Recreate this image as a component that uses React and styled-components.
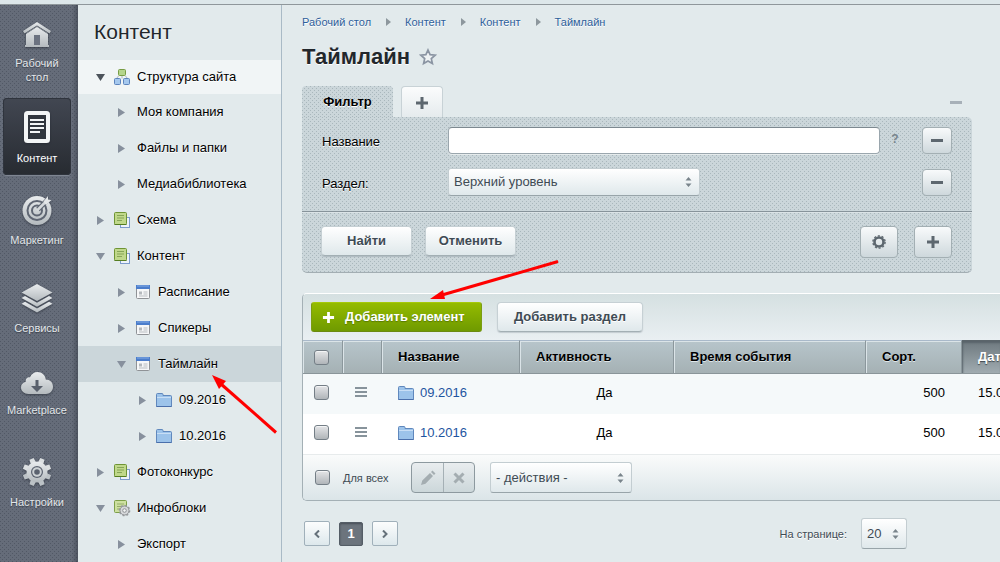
import React from 'react';
import styled, { createGlobalStyle, css } from 'styled-components';

const Global = createGlobalStyle`
  * { box-sizing: border-box; }
  body { margin: 0; background: #e2eaec; color: #111; font: 13px/16px "Liberation Sans", Arial, sans-serif; }
  button, input, select { font: inherit; color: inherit; margin: 0; }
  a { text-decoration: none; color: inherit; }
`;

const Shell = styled.div`
  display: flex;
  flex-direction: column;
  height: 100vh;
  overflow: hidden;
`;
const TopBar = styled.div`
  flex: none;
  height: 5px;
  background: #dde7ea;
  border-bottom: 1px solid #8f979b;
`;
const Body = styled.div`
  flex: 1;
  min-height: 0;
  display: flex;
`;

const Rail = styled.nav`
  flex: none;
  width: 78px;
  padding: 1px 7px 0 3px;
  display: flex;
  flex-direction: column;
  gap: 4px;
  background-color: #656c79;
  background-image: linear-gradient(to right, transparent 72px, rgba(30, 36, 46, 0.35)),
    conic-gradient(at 1px 1px, transparent 75%, #515865 0),
    conic-gradient(at 1px 1px, transparent 75%, #515865 0);
  background-size: auto, 4px 4px, 4px 4px;
  background-position: 0 0, 0 0, 2px 2px;
`;
const RailItem = styled.a`
  display: flex;
  flex-direction: column;
  align-items: center;
  gap: 8px;
  padding: 14px 0 10px;
  border-radius: 4px;
  color: #e3e7ea;
  font-size: 11px;
  line-height: 14px;
  text-align: center;
  text-shadow: 0 1px 1px #3b414c;
  ${(p) => p.$active && css`
    background: linear-gradient(#424752, #272b31);
    box-shadow: 0 0 0 1px #2f343d inset, 0 1px 0 #7f8692;
    color: #fff;
  `}
`;
const RailIcon = styled.span`
  display: flex;
  align-items: flex-end;
  height: ${(p) => p.$height}px;
  filter: drop-shadow(0 1px 1px rgba(30, 35, 45, 0.6));
  svg { display: block; }
`;

const Tree = styled.nav`
  flex: none;
  width: 204px;
  border-right: 1px solid #a9bac6;
  color: #000;
  text-shadow: 0 1px 0 #fff;
`;
const TreeTitle = styled.h2`
  margin: 0;
  padding: 15px 16px 16px;
  font-size: 21px;
  line-height: 24px;
  font-weight: 400;
  color: #22272c;
`;
const TreeRow = styled.a`
  display: flex;
  align-items: center;
  height: 36px;
  padding-left: ${(p) => 16 + p.$level * 21}px;
  background: ${(p) => (p.$tone === 'open' ? '#f1f5f6' : p.$tone === 'current' ? '#cbd6da' : 'transparent')};
  ${(p) => p.$tone === 'open' && css`height: 34px;`}
`;
const TreeArrow = styled.svg`
  width: 12px;
  height: 12px;
  flex: none;
  fill: ${(p) => (p.$dark ? '#4c535b' : '#87909d')};
`;
const TreeIcon = styled.span`
  width: 18px;
  height: 18px;
  margin: 0 6px 0 7px;
  svg { display: block; }
`;
const TreeLabel = styled.span`
  margin-left: ${(p) => (p.$plain ? 10 : 0)}px;
`;

const Main = styled.main`
  flex: 1;
  min-width: 0;
  overflow: hidden;
  padding: 9px 0 0 20px;
`;
const Crumbs = styled.ol`
  display: flex;
  align-items: center;
  margin: 0;
  padding: 0;
  list-style: none;
  font-size: 11px;
  line-height: 16px;
  color: #2e609b;
  text-shadow: 0 1px 0 #fff;
`;
const Crumb = styled.li`
  display: flex;
  align-items: center;
  svg { margin: 0 14px 0 15px; }
`;
const Heading = styled.div`
  display: flex;
  align-items: center;
  gap: 9px;
  margin: 13px 0 16px;
`;
const Title = styled.h1`
  margin: 0;
  font-size: 22px;
  line-height: 27px;
  font-weight: 700;
  color: #22272c;
  text-shadow: 0 1px 0 #fff;
`;
const IconButton = styled.button`
  display: block;
  padding: 0;
  border: 0;
  background: none;
  svg { display: block; }
`;

const dots = css`
  background-color: #cbd6da;
  background-image: conic-gradient(at 1px 1px, transparent 75%, #a9b7bc 0),
    conic-gradient(at 1px 1px, transparent 75%, #a9b7bc 0);
  background-size: 4px 4px;
  background-position: 0 0, 2px 2px;
`;
const Filter = styled.section`
  margin-right: 28px;
`;
const Tabs = styled.div`
  display: flex;
  align-items: flex-end;
  gap: 8px;
  height: 31px;
`;
const FilterTab = styled.button`
  height: 31px;
  width: 91px;
  padding: 0;
  border: 0;
  border-radius: 4px 4px 0 0;
  ${dots}
  font-weight: 700;
  color: #000;
  text-shadow: 0 1px 0 #fff;
`;
const AddTab = styled.button`
  display: flex;
  align-items: center;
  justify-content: center;
  height: 31px;
  width: 42px;
  padding: 2px 0 0;
  border: 1px solid #c8d2d6;
  border-bottom: 0;
  border-radius: 4px 4px 0 0;
  background: linear-gradient(#fbfcfc, #e5ebed);
`;
const Collapse = styled.button`
  width: 12px;
  height: 3px;
  margin: 0 10px 13px auto;
  padding: 0;
  border: 0;
  background: #a7b0b8;
`;
const FilterBody = styled.form`
  margin: 0;
  border-radius: 0 5px 5px 5px;
  border-bottom: 1px solid #a3aeb3;
  ${dots}
`;
const Fields = styled.div`
  padding: 2px 20px 8px;
`;
const Field = styled.div`
  display: flex;
  align-items: center;
  height: 42px;
`;
const FieldLabel = styled.label`
  width: 126px;
  flex: none;
  padding-top: 4px;
  color: #000;
  text-shadow: 0 1px 0 #fff;
`;
const FieldInput = styled.input`
  flex: 1;
  min-width: 0;
  height: 27px;
  padding: 0 6px;
  border: 1px solid #9aa6ad;
  border-top-color: #7d8990;
  border-radius: 4px;
  background: #fff;
  box-shadow: 0 1px 0 #e6eced;
`;
const Hint = styled.button`
  width: 30px;
  margin-right: 12px;
  padding: 0 0 2px;
  border: 0;
  background: none;
  font-weight: 700;
  font-size: 12px;
  color: #78848c;
`;
const Push = styled.span`
  flex: 1;
`;
const SelectWrap = styled.span`
  position: relative;
  display: block;
  flex: none;
  width: ${(p) => p.$width}px;
  height: ${(p) => p.$height}px;
  > svg { position: absolute; right: 8px; top: 50%; margin-top: -5px; pointer-events: none; }
`;
const SelectBox = styled.select`
  appearance: none;
  width: 100%;
  height: 100%;
  padding: 0 20px 0 5px;
  border: 1px solid #c3cdd1;
  border-bottom-color: #98a4a9;
  border-radius: 3px;
  background: linear-gradient(#fff, #dfe8eb);
  color: #3f4b54;
`;
const buttonFace = css`
  display: flex;
  align-items: center;
  justify-content: center;
  padding: 0;
  border: 1px solid #c6d0d4;
  border-bottom-color: #a3afb4;
  border-radius: 4px;
  background: linear-gradient(#fff, #dfe8eb);
  color: #3f4b54;
  font-weight: 700;
  text-shadow: 0 1px 0 #fff;
`;
const PushButton = styled.button`
  ${buttonFace}
  height: 30px;
  width: ${(p) => p.$width}px;
  box-shadow: 0 1px 1px rgba(90, 105, 115, 0.25);
`;
const SquareButton = styled.button`
  ${buttonFace}
  border-color: #a3afb3;
  background: linear-gradient(#f8fafb, #ced8dc);
  width: ${(p) => p.$width}px;
  height: ${(p) => p.$height}px;
`;
const FilterFoot = styled.div`
  display: flex;
  align-items: flex-start;
  gap: 13px;
  height: 61px;
  padding: 14px 20px 0 19px;
  border-top: 1px solid #87939a;
  box-shadow: inset 0 1px 0 #dce4e7;
`;
const ToolGroup = styled.div`
  display: flex;
  gap: 16px;
  margin-left: auto;
`;

const List = styled.section`
  margin-top: 20px;
  border: 1px solid #a4b0b5;
  border-top-color: #fff;
  border-right: 0;
  border-radius: 5px 0 0 5px;
  overflow: hidden;
`;
const ListBar = styled.div`
  display: flex;
  align-items: center;
  gap: 15px;
  height: 46px;
  padding: 0 8px;
  background: linear-gradient(#d5e0e1, #e9eff2);
`;
const AddButton = styled.button`
  display: flex;
  align-items: center;
  gap: 10px;
  width: 171px;
  height: 30px;
  padding: 0 0 0 10px;
  border: 1px solid #7b9d12;
  border-top-color: #a6c90a;
  border-bottom-color: #6b8a10;
  border-radius: 3px;
  background: linear-gradient(#94bb00, #6f9a00);
  color: #fff;
  font-weight: 700;
  text-shadow: 0 1px 1px #587a00;
`;
const Table = styled.table`
  width: 100%;
  table-layout: fixed;
  border-collapse: separate;
  border-spacing: 0;
`;
const Th = styled.th`
  height: 34px;
  padding: 0 0 0 ${(p) => p.$pad ?? 16}px;
  text-align: left;
  white-space: nowrap;
  background: linear-gradient(#b7c5cb, #a5b1b4);
  border-top: 1px solid #a9b9ca;
  border-bottom: 1px solid #8a9599;
  border-right: 1px solid #8b979c;
  box-shadow: inset 1px 1px 0 #dbe4e8;
  color: #000;
  text-shadow: 0 1px 0 #dfe7ea;
  ${(p) => p.$sorted && css`
    background: linear-gradient(#6e797f, #a0abb0);
    border-top-color: #5b656b;
    border-right: 0;
    box-shadow: inset 1px 2px 2px #59646a;
    color: #fff;
    text-shadow: 0 1px 1px #3f484d;
  `}
`;
const Tr = styled.tr`
  background: ${(p) => (p.$even ? '#fff' : '#f5f9fa')};
`;
const Td = styled.td`
  height: 40px;
  padding: 0 17px 2px ${(p) => p.$pad ?? 16}px;
  text-align: ${(p) => p.$align || 'left'};
  white-space: nowrap;
  color: #000;
  svg { display: block; }
`;
const MarkCell = styled(Td)`
  padding-bottom: 4px;
`;
const FolderLink = styled.a`
  display: flex;
  align-items: center;
  gap: 6px;
  color: #1e54a0;
`;
const Check = styled.input`
  appearance: none;
  display: block;
  flex: none;
  width: 15px;
  height: 15px;
  border: 1px solid #747e86;
  border-radius: 3px;
  background: linear-gradient(#e4e5e7, #b0b5b9);
  box-shadow: inset 0 1px 0 #f4f5f6;
`;
const ListFoot = styled.div`
  display: flex;
  align-items: center;
  height: 46px;
  padding: 0 12px;
  border-top: 1px solid #e7ebec;
  background: linear-gradient(#fafbfb, #dbe5e8);
`;
const ForAll = styled.label`
  display: flex;
  align-items: center;
  gap: 13px;
  width: 96px;
  font-size: 11px;
  color: #3f4b54;
`;
const Segments = styled.div`
  display: flex;
  height: 31px;
  margin-right: 15px;
  border: 1px solid #8d999f;
  border-radius: 4px;
  background: linear-gradient(#e9edef, #ccd7da);
`;
const Segment = styled.button`
  display: flex;
  align-items: center;
  justify-content: center;
  width: 31px;
  padding: 0;
  border: 0;
  background: none;
  & + & { border-left: 1px solid #a5b0b5; }
`;

const Pager = styled.div`
  display: flex;
  align-items: center;
  margin: 17px 93px 0 2px;
`;
const PageButton = styled.button`
  display: flex;
  align-items: center;
  justify-content: center;
  width: 26px;
  height: 25px;
  padding: 0;
  margin-right: 9px;
  border: 1px solid #a0b0ba;
  border-radius: 2px;
  background: linear-gradient(#fcfdfd, #dde8ec);
`;
const CurrentPage = styled(PageButton)`
  width: 24px;
  height: 24px;
  border-color: #545d66;
  background: #6c747d;
  box-shadow: inset 0 1px 2px #474e56;
  color: #fff;
  font-weight: 700;
`;
const PerPage = styled.label`
  display: flex;
  align-items: center;
  gap: 14px;
  margin-left: auto;
  font-size: 11px;
  color: #3f4b54;
  text-shadow: 0 1px 0 #fff;
  select { font-size: 13px; }
`;
const Arrows = styled.svg`
  position: absolute;
  left: 0;
  top: 0;
  width: 1000px;
  height: 562px;
  pointer-events: none;
`;
const Defs = styled.svg`
  position: absolute;
`;

const RailGradient = () => (
  <Defs width="0" height="0">
    <defs>
      <linearGradient id="metal" x1="0" y1="0" x2="0" y2="1">
        <stop offset="0" stopColor="#e9ecee" />
        <stop offset="1" stopColor="#b4babe" />
      </linearGradient>
    </defs>
  </Defs>
);
const railIcons = {
  home: (
    <svg width="30" height="27" viewBox="0 0 30 27" fill="url(#metal)">
      <path fillRule="evenodd" d="M15 5.500 L26 13 V24 H27 V26 H3 V24 H4 V13 Z M12 14 V24 H18 V14 Z" />
      <path d="M15 1 L29 10 L27.500 12.500 L15 4.500 L2.500 12.500 L1 10 Z" />
      <path d="M4 12.500L15 5.500L26 12.500" fill="none" stroke="#838a93" />
      <rect x="12" y="14" width="6" height="10" fill="#6b7280" />
    </svg>
  ),
  content: (
    <svg width="26" height="32" viewBox="0 0 26 32">
      <rect width="26" height="32" rx="3.500" fill="#f3f5f6" />
      <rect x="4" y="4" width="18" height="24" fill="#31363e" />
      <path d="M6 9h14M6 13h14M6 17h14M6 21h10" stroke="#f3f5f6" strokeWidth="2" />
    </svg>
  ),
  marketing: (
    <svg width="30" height="30" viewBox="0 0 30 30">
      <circle cx="15" cy="15.500" r="14.500" fill="url(#metal)" />
      <circle cx="15" cy="15.500" r="9.500" fill="none" stroke="#5f6673" strokeWidth="2" />
      <circle cx="15" cy="15.500" r="5" fill="none" stroke="#5f6673" strokeWidth="2" />
      <path d="M16 14.500L25 5.500" stroke="#5f6673" strokeWidth="5" />
      <path d="M15 15.500L24 6.500" stroke="#d4d8db" strokeWidth="2.500" />
      <path d="M21.500 6.500L26 1v3.500l3.500 .500L24 10z" fill="#e3e6e8" />
    </svg>
  ),
  services: (
    <svg width="32" height="29" viewBox="0 0 32 29" fill="url(#metal)">
      <path d="M16 0L31.500 8.500L16 17L.500 8.500Z" />
      <path d="M.500 14L4 12L16 18.800L28 12L31.500 14L16 22.800Z" />
      <path d="M.500 19.700L4 17.700L16 24.500L28 17.700L31.500 19.700L16 28.500Z" />
    </svg>
  ),
  market: (
    <svg width="34" height="24" viewBox="0 0 34 24">
      <path d="M8.500 23C4 23 1 20 1 16.500C1 13.300 3 11.200 5.800 10.700C5.300 7.500 7.500 5.800 10 6.200C11.400 3 14 1 17.500 1C22 1 25.400 4.200 25.800 8.600C30 8.600 33 11.500 33 15.800C33 20 30 23 26 23Z" fill="url(#metal)" />
      <path d="M15.500 9h3v6h4.500L17 21L11 15h4.500z" fill="#59606c" />
    </svg>
  ),
  settings: (
    <svg width="30" height="30" viewBox="-15 -15 30 30">
      {[22.5, 67.5, 112.5, 157.5, 202.5, 247.5, 292.5, 337.5].map((a) => (
        <path key={a} d="M-2.800-9L-2.300-14.300H2.300L2.800-9Z" fill={a > 90 && a < 270 ? '#bcc2c6' : '#dbdfe1'} transform={`rotate(${a})`} />
      ))}
      <circle r="10.500" fill="url(#metal)" />
      <circle r="6" fill="#5b626f" />
      <circle r="3.800" fill="none" stroke="#cdd2d5" strokeWidth="2" />
    </svg>
  ),
};

const SiteIcon = () => (
  <svg width="18" height="18" viewBox="0 0 18 18">
    <path d="M9 8v2.500M3.500 10.500l2-2.500M14.500 10.500l-2-2.500" stroke="#a9b3bd" fill="none" />
    <rect x="5.500" y="1.500" width="7" height="6" rx="1" fill="#b5d58c" stroke="#789c45" />
    <rect x="1.500" y="10.500" width="6" height="6" rx="1" fill="#a5c8ee" stroke="#5d84bd" />
    <rect x="10.500" y="10.500" width="6" height="6" rx="1" fill="#a5c8ee" stroke="#5d84bd" />
  </svg>
);
const BlockIcon = () => (
  <svg width="18" height="18" viewBox="0 0 18 18">
    <rect x="7.500" y="6.500" width="9" height="10" fill="#edf3fb" stroke="#7d9bcb" />
    <rect x="1.500" y="1.500" width="12" height="12" rx="1" fill="#c0d88b" stroke="#6f9434" />
    <path d="M1.500 13.500h12" stroke="#557d20" />
    <path d="M4 4.500h7M4 7h7M4 9.500h5" stroke="#87a557" />
  </svg>
);
const BlockGearIcon = () => (
  <svg width="18" height="18" viewBox="0 0 18 18">
    <rect x="1.500" y="1.500" width="12" height="12" rx="1" fill="#cde0a0" stroke="#7d9f48" />
    <path d="M4 5h7M4 7.500h4M4 10h3" stroke="#94ad68" />
    <circle cx="11.500" cy="11.500" r="4.500" fill="#d6d8da" stroke="#8e9194" strokeWidth="1" />
    <circle cx="11.500" cy="11.500" r="5.200" fill="none" stroke="#96999c" strokeWidth="1.300" strokeDasharray="2 2" />
    <circle cx="11.500" cy="11.500" r="1.800" fill="#f4f6f6" stroke="#8e9194" />
  </svg>
);
const PageIcon = () => (
  <svg width="18" height="18" viewBox="0 0 18 18">
    <rect x="2.500" y="2.500" width="13" height="13" rx="1" fill="#f6f7f8" stroke="#8f9296" />
    <path d="M2 2h14v4H2z" fill="#4b7dcb" />
    <path d="M3 3h12" stroke="#86aee6" />
    <path d="M5 8.500h3v3H5z" fill="#b4b8bd" />
    <path d="M9.500 9h4M9.500 11h4M5 13h8.500" stroke="#b9bdc1" />
  </svg>
);
const FolderIcon = ({ size = 18 }) => (
  <svg width={size} height={size === 18 ? 18 : 15} viewBox={size === 18 ? '0 0 18 18' : '1 2 16 15'}>
    <path d="M1.500 3.500q0-1 1-1h4.500q1 0 1 1v1h7.500q1 0 1 1v10h-15z" fill="#9cc3ea" stroke="#6088bd" />
    <path d="M2 6.500h14" stroke="#c8def5" />
    <path d="M1.500 15.500h15" stroke="#4a6fab" />
  </svg>
);
const Plus = ({ color = '#5d676f', s = 14 }) => (
  <svg width={s} height={s} viewBox="0 0 14 14"><path d="M7 1v12M1 7h12" stroke={color} strokeWidth="3" /></svg>
);
const Minus = () => (
  <svg width="12" height="3"><rect width="12" height="3" fill="#5d676f" /></svg>
);
const UpDown = () => (
  <svg width="7" height="10" viewBox="0 0 7 10" fill="#79848b"><path d="M.500 3.500L3.500 0l3 3.500zM.500 6.500L3.500 10l3-3.500z" /></svg>
);
const SmallGear = () => (
  <svg width="14" height="14" viewBox="-7 -7 14 14">
    <circle r="4.500" fill="none" stroke="#5d676f" strokeWidth="2.600" />
    <circle r="6.100" fill="none" stroke="#5d676f" strokeWidth="1.400" strokeDasharray="2.100 1.730" />
  </svg>
);

const rail = [
  ['home', 'Рабочий стол', 28],
  ['content', 'Контент', 31],
  ['marketing', 'Маркетинг', 32],
  ['services', 'Сервисы', 38],
  ['market', 'Marketplace', 32],
  ['settings', 'Настройки', 42],
];
const tree = [
  { label: 'Структура сайта', level: 0, open: true, icon: SiteIcon, tone: 'open' },
  { label: 'Моя компания', level: 1 },
  { label: 'Файлы и папки', level: 1 },
  { label: 'Медиабиблиотека', level: 1 },
  { label: 'Схема', level: 0, icon: BlockIcon },
  { label: 'Контент', level: 0, open: true, icon: BlockIcon },
  { label: 'Расписание', level: 1, icon: PageIcon },
  { label: 'Спикеры', level: 1, icon: PageIcon },
  { label: 'Таймлайн', level: 1, open: true, icon: PageIcon, tone: 'current' },
  { label: '09.2016', level: 2, icon: FolderIcon },
  { label: '10.2016', level: 2, icon: FolderIcon },
  { label: 'Фотоконкурс', level: 0, icon: BlockIcon },
  { label: 'Инфоблоки', level: 0, open: true, icon: BlockGearIcon },
  { label: 'Экспорт', level: 1 },
];
const crumbs = ['Рабочий стол', 'Контент', 'Контент', 'Таймлайн'];
const rows = ['09.2016', '10.2016'];

export default function App() {
  return (
    <Shell>
      <Global />
      <RailGradient />
      <TopBar />
      <Body>
        <Rail>
          {rail.map(([icon, label, height]) => (
            <RailItem key={icon} href="#" $active={icon === 'content'}>
              <RailIcon $height={height}>{railIcons[icon]}</RailIcon>
              <span>{label.split(' ').map((w, i) => <React.Fragment key={w}>{i > 0 && <br />}{w}</React.Fragment>)}</span>
            </RailItem>
          ))}
        </Rail>
        <Tree>
          <TreeTitle>Контент</TreeTitle>
          {tree.map(({ label, level, open, icon: Icon, tone }, i) => (
            <TreeRow key={i} href="#" $level={level} $tone={tone}>
              <TreeArrow viewBox="0 0 12 12" $dark={tone === 'open'}>
                <path d={open ? 'M2 3h9L6.500 10z' : 'M3 2l7 4.500L3 11z'} />
              </TreeArrow>
              {Icon && <TreeIcon><Icon /></TreeIcon>}
              <TreeLabel $plain={!Icon}>{label}</TreeLabel>
            </TreeRow>
          ))}
        </Tree>
        <Main>
          <Crumbs>
            {crumbs.map((c, i) => (
              <Crumb key={i}>
                {i > 0 && <svg width="5" height="8"><path d="M0 0l5 4-5 4z" fill="#8d979d" /></svg>}
                <a href="#">{c}</a>
              </Crumb>
            ))}
          </Crumbs>
          <Heading>
            <Title>Таймлайн</Title>
            <IconButton aria-label="В избранное">
              <svg width="18" height="18" viewBox="0 0 18 18"><path d="M9 2l2.100 4.700 5 .500-3.800 3.400 1.100 5L9 13l-4.400 2.600 1.100-5L1.900 7.200l5-.500z" fill="#eef2f4" stroke="#8b95a3" strokeWidth="1.700" /></svg>
            </IconButton>
          </Heading>
          <Filter>
            <Tabs>
              <FilterTab>Фильтр</FilterTab>
              <AddTab aria-label="Добавить фильтр"><Plus /></AddTab>
              <Collapse aria-label="Свернуть" />
            </Tabs>
            <FilterBody onSubmit={(e) => e.preventDefault()}>
              <Fields>
                <Field>
                  <FieldLabel htmlFor="name">Название</FieldLabel>
                  <FieldInput id="name" />
                  <Hint type="button">?</Hint>
                  <SquareButton type="button" $width={30} $height={27} aria-label="Убрать"><Minus /></SquareButton>
                </Field>
                <Field>
                  <FieldLabel htmlFor="section">Раздел:</FieldLabel>
                  <SelectWrap $width={252} $height={28}>
                    <SelectBox id="section"><option>Верхний уровень</option></SelectBox>
                    <UpDown />
                  </SelectWrap>
                  <Push />
                  <SquareButton type="button" $width={30} $height={27} aria-label="Убрать"><Minus /></SquareButton>
                </Field>
              </Fields>
              <FilterFoot>
                <PushButton $width={91}>Найти</PushButton>
                <PushButton type="button" $width={91}>Отменить</PushButton>
                <ToolGroup>
                  <SquareButton type="button" $width={38} $height={32} aria-label="Настроить"><SmallGear /></SquareButton>
                  <SquareButton type="button" $width={38} $height={32} aria-label="Добавить условие"><Plus /></SquareButton>
                </ToolGroup>
              </FilterFoot>
            </FilterBody>
          </Filter>
          <List>
            <ListBar>
              <AddButton><Plus color="#fff" s={13} />Добавить элемент</AddButton>
              <PushButton $width={146}>Добавить раздел</PushButton>
            </ListBar>
            <Table>
              <colgroup>
                <col width="40" /><col width="39" /><col width="138" /><col width="154" /><col width="192" /><col width="96" /><col />
              </colgroup>
              <thead>
                <tr>
                  <Th $pad={11}><Check type="checkbox" aria-label="Отметить все" /></Th>
                  <Th />
                  <Th>Название</Th>
                  <Th>Активность</Th>
                  <Th>Время события</Th>
                  <Th>Сорт.</Th>
                  <Th $sorted>Дат</Th>
                </tr>
              </thead>
              <tbody>
                {rows.map((name, i) => (
                  <Tr key={name} $even={i % 2 === 1}>
                    <MarkCell $pad={11}><Check type="checkbox" aria-label={name} /></MarkCell>
                    <MarkCell $pad={12}>
                      <svg width="12" height="12"><path d="M0 2h12M0 6h12M0 10h12" stroke="#87939b" strokeWidth="2" /></svg>
                    </MarkCell>
                    <Td><FolderLink href="#"><FolderIcon size={16} />{name}</FolderLink></Td>
                    <Td $align="center" $pad={32}>Да</Td>
                    <Td />
                    <Td $align="right">500</Td>
                    <Td>15.0</Td>
                  </Tr>
                ))}
              </tbody>
            </Table>
            <ListFoot>
              <ForAll><Check type="checkbox" />Для всех</ForAll>
              <Segments>
                <Segment aria-label="Изменить">
                  <svg width="16" height="16" viewBox="0 0 16 16" fill="#a4adb1"><path d="M1 15l1.300-4.500L10 3l3 3-7.500 7.700zM11 2l1.500-1.500 3 3L14 5z" /></svg>
                </Segment>
                <Segment aria-label="Удалить">
                  <svg width="12" height="12" viewBox="0 0 12 12"><path d="M1.500 1.500l9 9M10.500 1.500l-9 9" stroke="#a4adb1" strokeWidth="3" /></svg>
                </Segment>
              </Segments>
              <SelectWrap $width={142} $height={31}>
                <SelectBox aria-label="Действия"><option>- действия -</option></SelectBox>
                <UpDown />
              </SelectWrap>
            </ListFoot>
          </List>
          <Pager>
            <PageButton aria-label="Назад"><svg width="6" height="8"><path d="M5 0.500L1.500 4L5 7.500" fill="none" stroke="#65717a" strokeWidth="2" /></svg></PageButton>
            <CurrentPage>1</CurrentPage>
            <PageButton aria-label="Вперёд"><svg width="6" height="8"><path d="M1 0.500L4.500 4L1 7.500" fill="none" stroke="#65717a" strokeWidth="2" /></svg></PageButton>
            <PerPage>
              На странице:
              <SelectWrap $width={46} $height={31}>
                <SelectBox><option>20</option></SelectBox>
                <UpDown />
              </SelectWrap>
            </PerPage>
          </Pager>
        </Main>
      </Body>
      <Arrows viewBox="0 0 1000 562" fill="#f00" stroke="#f00">
        <path d="M558 261.500L442 295" strokeWidth="3" />
        <path d="M430 299L443 290l2 9z" stroke="none" />
        <path d="M276 432.500L221 384" strokeWidth="3" />
        <path d="M212 375l14 6-7 8z" stroke="none" />
      </Arrows>
    </Shell>
  );
}
